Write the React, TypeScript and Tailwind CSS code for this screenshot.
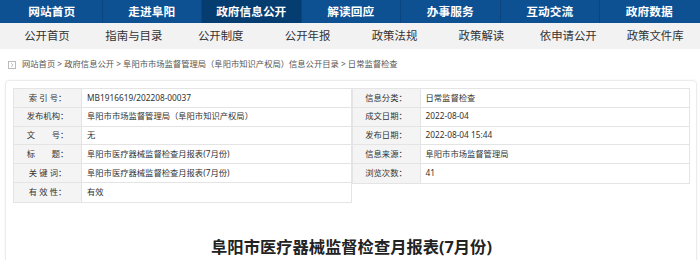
import { ReactNode } from 'react';

const topNav = ['网站首页', '走进阜阳', '政府信息公开', '解读回应', '办事服务', '互动交流', '政府数据'];
const subNav = ['公开首页', '指南与目录', '公开制度', '公开年报', '政策法规', '政策解读', '依申请公开', '政策文件库'];

const leftRows: [ReactNode, string][] = [
  ['索 引 号：', 'MB1916619/202208-00037'],
  ['发布机构：', '阜阳市市场监督管理局（阜阳市知识产权局）'],
  ['文　　号：', '无'],
  ['标　　题：', '阜阳市医疗器械监督检查月报表(7月份)'],
  ['关 键 词：', '阜阳市医疗器械监督检查月报表(7月份)'],
  ['有 效 性：', '有效'],
];

const rightRows: [string, string][] = [
  ['信息分类：', '日常监督检查'],
  ['成文日期：', '2022-08-04'],
  ['发布日期：', '2022-08-04 15:44'],
  ['信息来源：', '阜阳市市场监督管理局'],
  ['浏览次数：', '41'],
];

function InfoTable({ rows }: { rows: [ReactNode, string][] }) {
  return (
    <div className="flex-1 border border-[#e4e4e4]">
      {rows.map(([label, value], i) => (
        <div key={i} className={`flex h-[18.8px] ${i < rows.length - 1 ? 'border-b border-[#e4e4e4]' : ''}`}>
          <div className="w-[68px] shrink-0 flex items-center justify-center bg-[#f4f4f4] border-r border-[#e4e4e4] whitespace-pre">{label}</div>
          <div className="flex-1 flex items-center pl-[5px] whitespace-nowrap">{value}</div>
        </div>
      ))}
    </div>
  );
}

export default function App() {
  return (
    <div className="w-[700px] h-[260px] overflow-hidden bg-white" style={{ fontFamily: '"Noto Sans", "Noto Sans CJK SC", sans-serif' }}>
      {/* 顶部主导航 */}
      <div className="h-[23px] bg-[#0d5193] flex pl-[2px]">
        {topNav.map((t, i) => (
          <div
            key={t}
            className={`w-[99.5px] shrink-0 flex items-center justify-center text-white font-bold text-[11.7px] ${i > 0 ? 'border-l border-[#0a4580]' : ''} ${i === 2 ? 'bg-[#063d71]' : ''}`}
          >
            {t}
          </div>
        ))}
      </div>

      {/* 二级导航 */}
      <div className="h-[26px] bg-[#f2f2f2] flex pl-[3.5px]">
        {subNav.map(t => (
          <div key={t} className="w-[86.9px] shrink-0 flex items-center justify-center text-[#333] text-[11.4px]">{t}</div>
        ))}
      </div>

      {/* 面包屑 */}
      <div className="h-[31px] flex items-center pl-[8px] gap-[6px] text-[8.3px] text-[#555]">
        <svg width="8" height="8" viewBox="0 0 8 8" className="shrink-0">
          <rect x="0.5" y="0.5" width="7" height="7" fill="none" stroke="#bbb" strokeWidth="1" />
          <path d="M3 2.2 L5 4 L3 5.8" fill="none" stroke="#bbb" strokeWidth="0.9" />
        </svg>
        <span>网站首页 &gt; 政府信息公开 &gt; 阜阳市市场监督管理局（阜阳市知识产权局）信息公开目录 &gt; 日常监督检查</span>
      </div>

      {/* 内容卡片 */}
      <div className="ml-[5px] mr-[3px] h-[200px] border border-[#ececec] rounded-[4px] shadow-[0_0_3px_rgba(0,0,0,0.05)] pt-[7px] pl-[7px] pr-[6px]">
        <div className="flex items-start text-[8.3px] text-[#333]">
          <InfoTable rows={leftRows} />
          <InfoTable rows={rightRows} />
        </div>
        <h1 className="mt-[32px] text-center text-[16.3px] font-bold text-[#222]">阜阳市医疗器械监督检查月报表(7月份)</h1>
      </div>
    </div>
  );
}
